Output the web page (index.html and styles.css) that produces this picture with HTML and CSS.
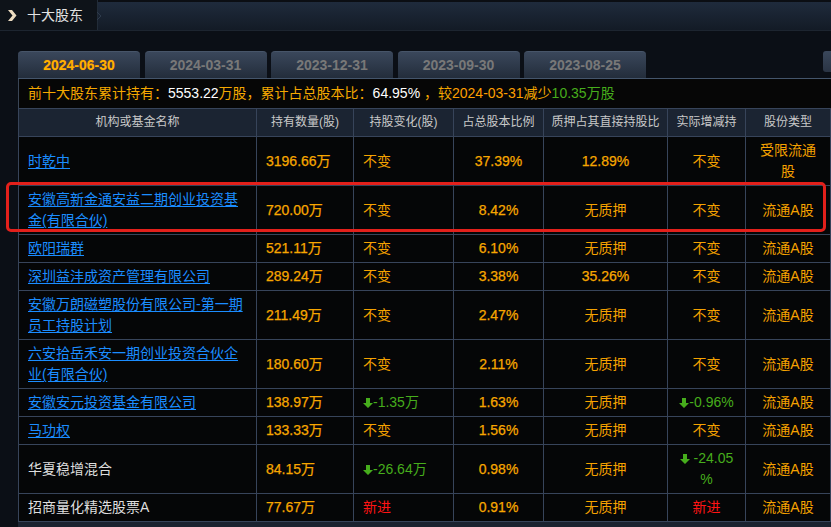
FILE: index.html
```
<!DOCTYPE html>
<html lang="zh">
<head>
<meta charset="utf-8">
<title>十大股东</title>
<link rel="stylesheet" href="styles.css">
</head>
<body>
<div class="page">
  <div class="topbar">
    <div class="title-tab">
      <svg class="chev" width="10" height="11" viewBox="0 0 10 11"><path d="M1 0 H5 L9.5 5.5 L5 11 H1 L5.5 5.5 Z" fill="#ecdcc0"/></svg>
      <span class="title">十大股东</span>
      <svg class="notch" width="5" height="8" viewBox="0 0 5 8"><path d="M0 0 L4 4 L0 8" fill="none" stroke="#2e3b4c" stroke-width="1"/></svg>
    </div>
    <div class="topfill"></div>
  </div>

  <div class="main">
    <div class="tabs">
      <div class="tab active">2024-06-30</div>
      <div class="tab">2024-03-31</div>
      <div class="tab">2023-12-31</div>
      <div class="tab">2023-09-30</div>
      <div class="tab">2023-08-25</div>
      <div class="tab-more"></div>
    </div>

    <div class="panel">
      <div class="summary">
        <span class="o">前十大股东累计持有：</span><span class="w">5553.22</span><span class="o">万股，累计占总股本比：</span><span class="w">64.95%</span><span class="o"> ，较</span><span class="o2">2024-03-31</span><span class="o">减少</span><span class="g">10.35万股</span>
      </div>
      <table class="holders">
        <colgroup>
          <col class="c1"><col class="c2"><col class="c3"><col class="c4"><col class="c5"><col class="c6"><col class="c7">
        </colgroup>
        <thead>
          <tr>
            <th>机构或基金名称</th><th>持有数量(股)</th><th>持股变化(股)</th><th>占总股本比例</th><th>质押占其直接持股比</th><th>实际增减持</th><th>股份类型</th>
          </tr>
        </thead>
        <tbody>
          <tr>
            <td class="name"><a href="#">时乾中</a></td><td class="num">3196.66万</td><td class="chg">不变</td><td class="ctr num">37.39%</td><td class="ctr num">12.89%</td><td class="ctr">不变</td><td class="ctr">受限流通<br>股</td>
          </tr>
          <tr>
            <td class="name"><a href="#">安徽高新金通安益二期创业投资基金(有限合伙)</a></td><td class="num">720.00万</td><td class="chg">不变</td><td class="ctr num">8.42%</td><td class="ctr">无质押</td><td class="ctr">不变</td><td class="ctr">流通A股</td>
          </tr>
          <tr>
            <td class="name"><a href="#">欧阳瑞群</a></td><td class="num">521.11万</td><td class="chg">不变</td><td class="ctr num">6.10%</td><td class="ctr">无质押</td><td class="ctr">不变</td><td class="ctr">流通A股</td>
          </tr>
          <tr>
            <td class="name"><a href="#">深圳益沣成资产管理有限公司</a></td><td class="num">289.24万</td><td class="chg">不变</td><td class="ctr num">3.38%</td><td class="ctr num">35.26%</td><td class="ctr">不变</td><td class="ctr">流通A股</td>
          </tr>
          <tr>
            <td class="name"><a href="#">安徽万朗磁塑股份有限公司-第一期员工持股计划</a></td><td class="num">211.49万</td><td class="chg">不变</td><td class="ctr num">2.47%</td><td class="ctr">无质押</td><td class="ctr">不变</td><td class="ctr">流通A股</td>
          </tr>
          <tr>
            <td class="name"><a href="#">六安拾岳禾安一期创业投资合伙企业(有限合伙)</a></td><td class="num">180.60万</td><td class="chg">不变</td><td class="ctr num">2.11%</td><td class="ctr">无质押</td><td class="ctr">不变</td><td class="ctr">流通A股</td>
          </tr>
          <tr>
            <td class="name"><a href="#">安徽安元投资基金有限公司</a></td><td class="num">138.97万</td><td class="chg down"><svg class="arrow" width="10" height="10" viewBox="0 0 10 10"><path d="M3 0 H7 V5 H10 L5 10 L0 5 H3 Z" fill="#46ad1c"/></svg>-1.35万</td><td class="ctr num">1.63%</td><td class="ctr">无质押</td><td class="ctr down"><svg class="arrow" width="10" height="10" viewBox="0 0 10 10"><path d="M3 0 H7 V5 H10 L5 10 L0 5 H3 Z" fill="#46ad1c"/></svg>-0.96%</td><td class="ctr">流通A股</td>
          </tr>
          <tr>
            <td class="name"><a href="#">马功权</a></td><td class="num">133.33万</td><td class="chg">不变</td><td class="ctr num">1.56%</td><td class="ctr">无质押</td><td class="ctr">不变</td><td class="ctr">流通A股</td>
          </tr>
          <tr>
            <td class="name plain">华夏稳增混合</td><td class="num">84.15万</td><td class="chg down"><svg class="arrow" width="10" height="10" viewBox="0 0 10 10"><path d="M3 0 H7 V5 H10 L5 10 L0 5 H3 Z" fill="#46ad1c"/></svg>-26.64万</td><td class="ctr num">0.98%</td><td class="ctr">无质押</td><td class="ctr down"><svg class="arrow" width="10" height="10" viewBox="0 0 10 10"><path d="M3 0 H7 V5 H10 L5 10 L0 5 H3 Z" fill="#46ad1c"/></svg> -24.05<br>%</td><td class="ctr">流通A股</td>
          </tr>
          <tr>
            <td class="name plain">招商量化精选股票A</td><td class="num">77.67万</td><td class="chg new">新进</td><td class="ctr num">0.91%</td><td class="ctr">无质押</td><td class="ctr new">新进</td><td class="ctr">流通A股</td>
          </tr>
        </tbody>
      </table>
      <div class="panel-foot"></div>
    </div>
  </div>

  <div class="annot"></div>
</div>
</body>
</html>
```

FILE: styles.css
```
html, body {
  margin: 0;
  padding: 0;
  background: #0b0f16;
  overflow: hidden;
}

.page {
  position: relative;
  width: 831px;
  height: 527px;
  overflow: hidden;
  font-family: "Liberation Sans", "Noto Sans CJK SC", sans-serif;
  font-size: 14px;
  color: #f5a200;
}

/* top bar */
.topbar {
  display: flex;
  height: 30px;
  border-bottom: 1px solid #1d2530;
}

.title-tab {
  display: flex;
  align-items: center;
  width: 97px;
  background: #0e1319;
  border-right: 1px solid #222c38;
  position: relative;
  flex: none;
}

.chev {
  margin-left: 7px;
  margin-right: 10px;
}

.title {
  color: #e2e2e2;
  font-size: 14px;
  line-height: 20px;
}

.notch {
  position: absolute;
  right: -5px;
  top: 12px;
}

.topfill {
  flex: 1;
  background: linear-gradient(#1f2b3c, #131b26);
  border-top: 2px solid #0b0e13;
}

/* main area */
.main {
  padding-top: 20px;
  padding-left: 18px;
}

.tabs {
  display: flex;
  gap: 4.5px;
  height: 27px;
  align-items: flex-start;
}

.tab {
  width: 122px;
  height: 27px;
  box-sizing: border-box;
  border-radius: 4px 4px 0 0;
  background: linear-gradient(#3a475b, #232d3b);
  border-top: 1px solid #475569;
  text-align: center;
  font-family: "Liberation Sans", sans-serif;
  font-weight: bold;
  font-size: 14px;
  line-height: 26px;
  color: #787878;
  flex: none;
}

.tab.active {
  color: #ffb200;
  text-shadow: 0 0 1px rgba(255, 90, 0, 0.6);
}

.tab-more {
  margin-left: auto;
  width: 8px;
  height: 21px;
  border-radius: 3px 0 0 3px;
  background: linear-gradient(#3a475b, #2a3444);
  flex: none;
}

/* panel */
.panel {
  border-top: 1px solid #44556b;
}

.summary {
  height: 29px;
  line-height: 29px;
  padding-left: 9px;
  background: #060606;
  border-left: 1px solid #3a4657;
  white-space: nowrap;
}

.summary .o { color: #f5a800; }
.summary .o2 { color: #ff9f00; }
.summary .w { color: #ffffff; }
.summary .g { color: #46ad1c; }

.holders {
  width: 812px;
  table-layout: fixed;
  border-collapse: collapse;
  background: #050607;
}

.holders .c1 { width: 238px; }
.holders .c2 { width: 97px; }
.holders .c3 { width: 100px; }
.holders .c4 { width: 90px; }
.holders .c5 { width: 124px; }
.holders .c6 { width: 78px; }
.holders .c7 { width: 85px; }

.holders th,
.holders td {
  border: 1px solid #37445a;
  padding: 3px 9px;
  line-height: 21px;
  vertical-align: middle;
}

.holders th {
  background: #1b2432;
  color: #c9c9c9;
  font-weight: normal;
  font-size: 12px;
  text-align: center;
  padding: 3px 2px;
  white-space: nowrap;
}

.holders td {
  color: #f5a200;
  text-align: left;
}

.holders td.ctr {
  text-align: center;
  padding-left: 2px;
  padding-right: 2px;
}

.holders td.num {
  color: #f7a600;
  -webkit-text-stroke: 0.25px #f7a600;
}

.holders td.name a {
  color: #1b8dff;
  text-decoration: underline;
  text-underline-offset: 2px;
}

.holders td.name.plain {
  color: #dedede;
}

.holders td.down {
  color: #46ad1c;
}

.holders td.new {
  color: #ff1414;
}

.arrow {
  vertical-align: -1px;
}

.panel-foot {
  height: 10px;
  background: #1b2330;
}

/* annotation overlay */
.annot {
  position: absolute;
  left: 6px;
  top: 182px;
  width: 820px;
  height: 50px;
  box-sizing: border-box;
  border: 3px solid #e3201b;
  border-radius: 5px;
  pointer-events: none;
}
```
